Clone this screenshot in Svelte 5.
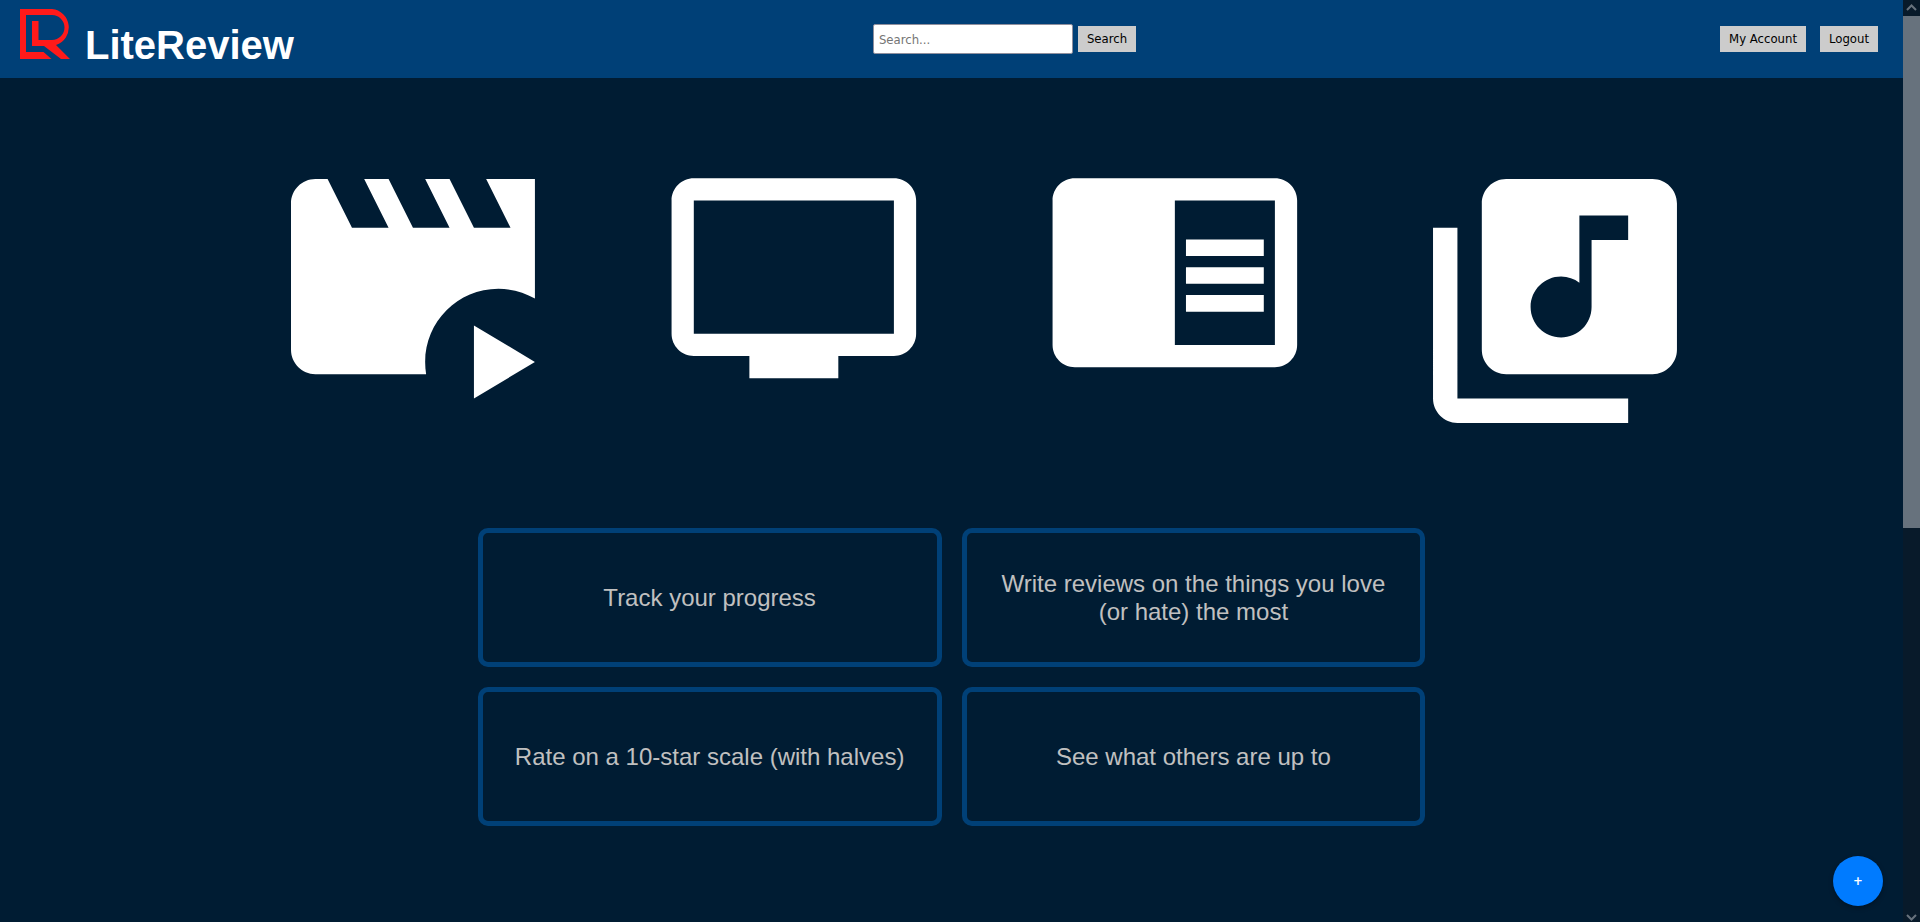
<script>
  const features = [
    'Track your progress',
    'Write reviews on the things you love (or hate) the most',
    'Rate on a 10-star scale (with halves)',
    'See what others are up to',
  ];

  const media = [
    {
      label: 'Movies',
      box: '-0.05 2.03 24 24',
      path: 'M13 19c0-3.31 2.69-6 6-6 1.1 0 2.12.3 3 .8V4h-4l2 4h-3l-2-4h-2l2 4h-3l-2-4H8l2 4H7L5 4H4c-1.1 0-2 .9-2 2v12c0 1.1.9 2 2 2h9.08c-.05-.33-.08-.66-.08-1zM17 16v6l5-3z',
    },
    {
      label: 'TV shows',
      box: '-1.21 0.91 26.33 26.33',
      path: 'M21 3H3c-1.1 0-2 .9-2 2v12c0 1.1.9 2 2 2h5v2h8v-2h5c1.1 0 2-.9 2-2V5c0-1.1-.9-2-2-2zm0 14H3V5h18v12z',
    },
    {
      label: 'Books',
      box: '-1.21 1.91 26.33 26.33',
      path: 'M13 12h7v1.5h-7zm0-2.5h7V11h-7zm0 5h7V16h-7zM21 4H3c-1.1 0-2 .9-2 2v13c0 1.1.9 2 2 2h18c1.1 0 2-.9 2-2V6c0-1.1-.9-2-2-2zm0 15h-9V6h9v13z',
    },
    {
      label: 'Music',
      box: '0.03 0.03 24 24',
      path: 'M20 2H8c-1.1 0-2 .9-2 2v12c0 1.1.9 2 2 2h12c1.1 0 2-.9 2-2V4c0-1.1-.9-2-2-2zm-2 5h-3v5.5c0 1.38-1.12 2.5-2.5 2.5S10 13.88 10 12.5s1.12-2.5 2.5-2.5c.57 0 1.08.19 1.5.51V5h4v2zM4 6H2v14c0 1.1.9 2 2 2h14v-2H4V6z',
    },
  ];

  let query = $state('');
</script>

<div class="shell">
  <div class="page">
    <header>
      <a class="brand" href="#home">
        <svg viewBox="0 0 50 50" width="50" height="50" aria-hidden="true">
          <path
            d="M0 0H32A18.5 18.5 0 0 1 36 36L50 50H41L24 37H12V12H18.500V31H32A12.500 12.500 0 0 0 32 6H6V43H23.500L31.500 50H0Z"
            fill="#ff1a1a"
          />
        </svg>
        <span>LiteReview</span>
      </a>
      <form class="search" onsubmit={(e) => e.preventDefault()}>
        <input type="text" aria-label="Search" placeholder="Search..." bind:value={query} />
        <button type="submit">Search</button>
      </form>
      <nav>
        <button type="button">My Account</button>
        <button type="button">Logout</button>
      </nav>
    </header>

    <main>
      <section class="media">
        {#each media as item}
          <svg viewBox={item.box} role="img" aria-label={item.label}>
            <path d={item.path} fill="#fff" />
          </svg>
        {/each}
      </section>
      <section class="features">
        {#each features as text}
          <div class="card"><p>{text}</p></div>
        {/each}
      </section>
    </main>
    <button class="add" type="button">+</button>
  </div>

  <div class="scrollbar" aria-hidden="true">
    <svg class="cap" viewBox="0 0 17 16"><path d="M4 10l4.500-4.500L13 10" /></svg>
    <div class="track"><div class="thumb"></div></div>
    <svg class="cap end" viewBox="0 0 17 12"><path d="M4 5l4.500 4.500L13 5" /></svg>
  </div>
</div>

<style>
  :global(body) {
    margin: 0;
    overflow: hidden;
    background: #001c33;
    font-family: 'Liberation Sans', Arial, sans-serif;
  }

  .shell {
    display: flex;
    height: 100vh;
  }

  .page {
    position: relative;
    flex: 1;
    min-width: 0;
    overflow: hidden;
  }

  header {
    display: flex;
    justify-content: space-between;
    align-items: center;
    box-sizing: border-box;
    height: 78px;
    padding: 0 25px 0 20px;
    background: #004077;
  }

  .brand {
    display: flex;
    align-items: baseline;
    gap: 15px;
    margin-bottom: 2px;
    color: #fff;
    font-size: 40px;
    font-weight: 700;
    line-height: 46px;
    text-decoration: none;
  }

  .search {
    display: flex;
    align-items: center;
    gap: 5px;
    margin-right: 5px;
  }

  input,
  button {
    font-family: 'DejaVu Sans Condensed', Tahoma, 'Noto Sans', sans-serif;
    font-size: 13px;
    line-height: 16px;
  }

  input {
    box-sizing: border-box;
    width: 200px;
    height: 30px;
    padding: 0 5px;
    border: 1px solid #8f8f9d;
    border-radius: 2px;
    background: #fff;
    color: #000;
  }

  input::placeholder {
    color: #757575;
    opacity: 1;
  }

  button {
    padding: 5px 9px;
    border: 0;
    background: #ccc;
    color: #000;
  }

  nav {
    display: flex;
    gap: 14px;
  }

  .media {
    display: flex;
    justify-content: space-between;
    padding: 77px 10.6% 80px 14%;
  }

  .media svg {
    width: 20.4%;
    height: auto;
    aspect-ratio: 1;
  }

  .features {
    display: grid;
    grid-template-columns: 1fr 1fr;
    gap: 20px;
    width: calc(50% - 4px);
    margin: 0 auto;
  }

  .card {
    display: flex;
    align-items: center;
    justify-content: center;
    box-sizing: border-box;
    min-height: 139px;
    padding: 22px 20px 20px;
    border: 5px solid #004077;
    border-radius: 10px;
  }

  .card p {
    margin: 0;
    color: #c0c0c0;
    font-size: 24px;
    line-height: 28px;
    text-align: center;
  }

  .add {
    position: absolute;
    right: 20px;
    bottom: 16px;
    width: 50px;
    height: 50px;
    padding: 0;
    border-radius: 50%;
    background: #007bff;
    box-shadow: 0 2px 5px rgba(0, 0, 0, 0.3);
    color: #fff;
    font-weight: 700;
  }

  .scrollbar {
    display: flex;
    flex-direction: column;
    width: 17px;
    background: #081a2a;
  }

  .cap {
    flex: none;
    width: 17px;
    height: 16px;
    fill: none;
    stroke: #67727d;
    stroke-width: 2;
  }

  .end {
    height: 12px;
  }

  .track {
    flex: 1;
  }

  .thumb {
    height: 57.300%;
    background: #67727d;
  }
</style>
